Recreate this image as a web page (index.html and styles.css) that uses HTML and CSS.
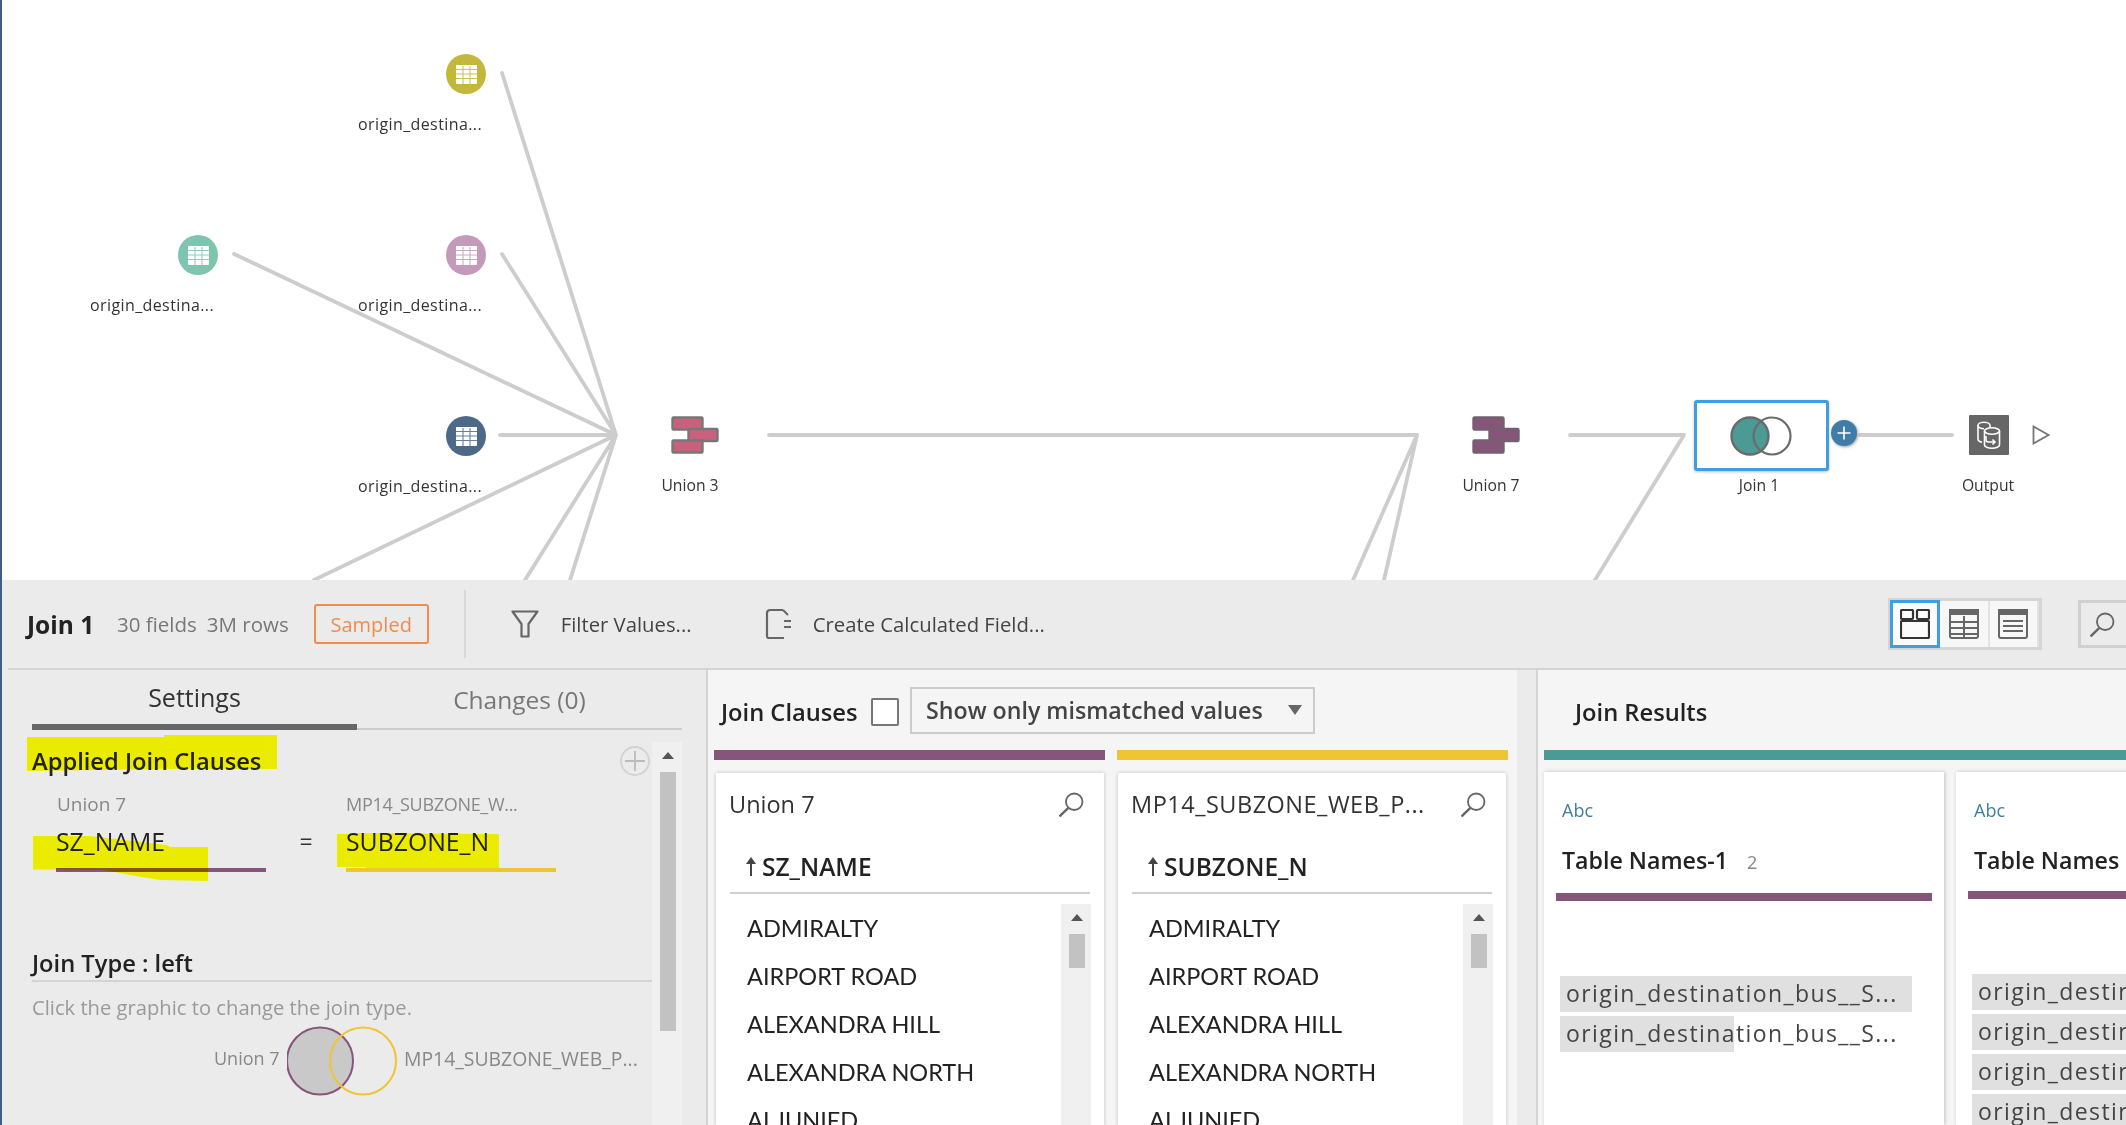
FILE: index.html
```html
<!DOCTYPE html>
<html lang="en">
<head>
<meta charset="utf-8">
<title>Join 1</title>
<link rel="stylesheet" href="styles.css">
</head>
<body>
<svg class="defs" width="0" height="0" aria-hidden="true">
  <defs>
    <symbol id="i-search" viewBox="1 0 23 23">
      <circle cx="15" cy="9" r="7.6" fill="none" stroke="currentColor" stroke-width="1.7"/>
      <path d="M9.6 14.6 1.5 22.5" fill="none" stroke="currentColor" stroke-width="2.2"/>
    </symbol>
    <symbol id="i-grid" viewBox="0 0 21 19">
      <rect width="21" height="19" rx="1" fill="#fff"/>
      <path d="M0 4.500h21M0 9h21M0 13.500h21M7 0v19M14 0v19" stroke="currentColor" stroke-width="1.100" opacity=".85"/>
      <path d="M0 .5h21" stroke="#fff" stroke-width="1"/>
    </symbol>
    <symbol id="i-brick" viewBox="0 0 48 38">
      <rect x="1.500" y="1.500" width="30" height="12" rx="1" stroke="currentColor" stroke-width="2.400"/>
      <rect x="17.500" y="13" width="29" height="12" rx="1" stroke="currentColor" stroke-width="2.400"/>
      <rect x="1.500" y="24.500" width="30" height="12" rx="1" stroke="currentColor" stroke-width="2.400"/>
    </symbol>
  </defs>
</svg>
<div class="app">
  <section class="canvas">
    <svg class="links" viewBox="0 0 2126 580" aria-hidden="true">
      <path d="M502 73 616 435M502 254 616 435M234 254 616 435M500 435H616M314 580 616 435M525 580 616 435M570 580 616 435"/>
      <path d="M769 435H1417M1353 580 1417 435M1384 580 1417 435M1570 435H1684M1595 580 1684 435M1860 435H1952"/>
    </svg>

    <div class="node dot n-yellow"><svg class="grid-icon"><use href="#i-grid"/></svg><span class="dot-label">origin_destina...</span></div>
    <div class="node dot n-pink"><svg class="grid-icon"><use href="#i-grid"/></svg><span class="dot-label">origin_destina...</span></div>
    <div class="node dot n-green"><svg class="grid-icon"><use href="#i-grid"/></svg><span class="dot-label">origin_destina...</span></div>
    <div class="node dot n-navy"><svg class="grid-icon"><use href="#i-grid"/></svg><span class="dot-label">origin_destina...</span></div>

    <svg class="node brick brick-3"><use href="#i-brick"/></svg>
    <span class="node step-label l-union3">Union 3</span>
    <svg class="node brick brick-7"><use href="#i-brick"/></svg>
    <span class="node step-label l-union7">Union 7</span>

    <div class="node join-box">
      <svg class="join-venn" viewBox="0 0 62 40" aria-hidden="true">
        <circle cx="20" cy="20" r="18.500" fill="#4b9a94" stroke="#6b6b6b" stroke-width="2.400"/>
        <circle cx="42" cy="20" r="18.500" fill="none" stroke="#6b6b6b" stroke-width="2.200"/>
      </svg>
    </div>
    <span class="node step-label l-join">Join 1</span>
    <div class="node add-btn">
      <svg viewBox="0 0 16 16" aria-hidden="true"><path d="M8 1.500v13M1.500 8h13" stroke="#fff" stroke-width="1.600"/></svg>
    </div>
    <div class="node output">
      <svg viewBox="0 0 40 40" aria-hidden="true" fill="none" stroke="#fff" stroke-width="1.600">
        <path d="M21 12.500v-2c0-1.800-2.800-3.200-6-3.200s-6 1.400-6 3.200V24c0 1.700 1.700 2.800 4 3.200"/>
        <path d="M9 10.500c0 1.800 2.800 3.200 6 3.200"/>
        <ellipse cx="23" cy="16" rx="7.500" ry="3.200"/>
        <path d="M15.500 16v14c0 1.800 3.400 3.200 7.500 3.200s7.500-1.400 7.500-3.200V16"/>
        <path d="M17 21v4c0 1 1 2 2.500 2H26M23.500 24.500 26 27l-2.500 2.500"/>
      </svg>
    </div>
    <span class="node step-label l-output">Output</span>
    <svg class="node play" viewBox="0 0 18 20" aria-hidden="true"><path d="M1.500 1.500v17l15-8.500z" fill="none" stroke="#777" stroke-width="1.800"/></svg>
  </section>

  <section class="panel">
    <header class="toolbar">
      <h1 class="tb-title">Join 1</h1>
      <span class="tb-meta">30 fields</span>
      <span class="tb-meta tb-rows">3M rows</span>
      <span class="sampled">Sampled</span>
      <span class="tb-divider"></span>
      <svg class="tb-icon filter-icon" viewBox="0 0 28 28" aria-hidden="true"><path d="M1.500 1.500h25L17.500 14v12.500h-7V14z" fill="none" stroke="#666" stroke-width="2.200" stroke-linejoin="round"/></svg>
      <span class="tb-action a-filter">Filter Values...</span>
      <svg class="tb-icon calc-icon" viewBox="0 0 26 32" aria-hidden="true"><path d="M18 2H5.500Q2 2 2 5v23q0 2 2 2h15M19 13h7M19 19h7" fill="none" stroke="#666" stroke-width="2.200"/><path d="M18 2l5 5" stroke="#666" stroke-width="2"/></svg>
      <span class="tb-action">Create Calculated Field...</span>
      <span class="tb-spacer"></span>
      <div class="view-toggle">
        <button class="view-btn active" type="button" aria-label="Cards">
          <svg viewBox="0 0 30 30" fill="none" stroke="#333" stroke-width="2.200"><rect x="1" y="1" width="12" height="9" rx="1"/><rect x="17" y="1" width="12" height="9" rx="1"/><rect x="1" y="12" width="28" height="17" rx="1"/></svg>
        </button>
        <button class="view-btn" type="button" aria-label="Table">
          <svg viewBox="0 0 30 30" fill="none" stroke="#666" stroke-width="2"><rect x="1" y="1" width="28" height="28" rx="2"/><path d="M0 3h30" stroke-width="6"/><path d="M1 13h28M1 19h28M1 25h28M15 7v22"/></svg>
        </button>
        <button class="view-btn" type="button" aria-label="List">
          <svg viewBox="0 0 30 30" fill="none" stroke="#666" stroke-width="2"><rect x="1" y="1" width="28" height="28" rx="2"/><path d="M0 3h30" stroke-width="6"/><path d="M5 12h20M5 17h20M5 22h20"/></svg>
        </button>
      </div>
      <div class="tb-search"><svg class="search-svg"><use href="#i-search"/></svg></div>
    </header>

    <div class="workspace">
      <aside class="settings">
        <div class="tabs">
          <div class="tab active">Settings</div>
          <div class="tab">Changes (0)</div>
        </div>
        <div class="settings-body">
          <div class="settings-content">
            <div class="clause-head">
              <h2 class="section-title">Applied Join Clauses</h2>
              <span class="add-clause">
                <svg viewBox="0 0 30 30" aria-hidden="true"><circle cx="15" cy="15" r="14" fill="none" stroke="#d2d2d2" stroke-width="1.800"/><path d="M15 5v20M5 15h20" stroke="#bbb" stroke-width="1.800"/></svg>
              </span>
            </div>
            <div class="clause">
              <span class="clause-src">Union 7</span>
              <span></span>
              <span class="clause-src src-long">MP14_SUBZONE_W...</span>
              <span class="clause-field u-purple">SZ_NAME</span>
              <span class="clause-eq">=</span>
              <span class="clause-field u-yellow">SUBZONE_N</span>
            </div>
            <h2 class="section-title join-type">Join Type : left</h2>
            <p class="hint">Click the graphic to change the join type.</p>
            <div class="venn-row">
              <span class="venn-label venn-left">Union 7</span>
              <svg class="venn" viewBox="0 0 110 70" aria-hidden="true">
                <ellipse cx="33" cy="35" rx="33" ry="33.500" fill="#c9c9c9" stroke="#85557a" stroke-width="2"/>
                <ellipse cx="76" cy="35" rx="33" ry="33.500" fill="none" stroke="#eec535" stroke-width="2"/>
              </svg>
              <span class="venn-label">MP14_SUBZONE_WEB_P...</span>
            </div>
          </div>
          <div class="scroll scroll-left"><span class="scroll-up"></span><span class="thumb thumb-left"></span></div>
        </div>
        <svg class="highlights" viewBox="2 670 704 455" aria-hidden="true">
          <path d="M27 737H164V735H277V769H170L27 771Z"/>
          <path d="M33 836H90L167 845L170 847H208V881L160 880L130 875L105 870L33 869.500Z"/>
          <path d="M337 834H358V833L499 834V868H366V867H337Z"/>
        </svg>
      </aside>

      <section class="clauses">
        <div class="pane-head">
          <h2 class="pane-title pt-clauses">Join Clauses</h2>
          <span class="checkbox"></span>
          <div class="dropdown"><span>Show only mismatched values</span><i class="caret"></i></div>
        </div>
        <div class="clause-cols">
          <div class="clause-col">
            <div class="colorbar c-purple"></div>
            <div class="field-card">
              <div class="fc-title"><span class="fc-name">Union 7</span><svg class="fc-search"><use href="#i-search"/></svg></div>
              <div class="fc-head"><span class="sort-arrow"></span>SZ_NAME</div>
              <div class="fc-list">
                <ul class="fc-values"><li>ADMIRALTY</li><li>AIRPORT ROAD</li><li>ALEXANDRA HILL</li><li>ALEXANDRA NORTH</li><li>ALJUNIED</li></ul>
                <div class="scroll"><span class="scroll-up"></span><span class="thumb"></span></div>
              </div>
            </div>
          </div>
          <div class="clause-col">
            <div class="colorbar c-yellow"></div>
            <div class="field-card">
              <div class="fc-title"><span class="fc-name fc-long">MP14_SUBZONE_WEB_P...</span><svg class="fc-search"><use href="#i-search"/></svg></div>
              <div class="fc-head"><span class="sort-arrow"></span>SUBZONE_N</div>
              <div class="fc-list">
                <ul class="fc-values"><li>ADMIRALTY</li><li>AIRPORT ROAD</li><li>ALEXANDRA HILL</li><li>ALEXANDRA NORTH</li><li>ALJUNIED</li></ul>
                <div class="scroll"><span class="scroll-up"></span><span class="thumb"></span></div>
              </div>
            </div>
          </div>
        </div>
      </section>

      <section class="results">
        <div class="pane-head results-head"><h2 class="pane-title">Join Results</h2></div>
        <div class="colorbar c-teal"></div>
        <div class="result-cards">
          <article class="result-card">
            <div class="abc">Abc</div>
            <div class="rc-name">Table Names-1<span class="rc-count">2</span></div>
            <div class="rc-bar"></div>
            <div class="rc-values">
              <div class="rc-value">origin_destination_bus__S...</div>
              <div class="rc-value partial">origin_destination_bus__S...</div>
            </div>
          </article>
          <article class="result-card">
            <div class="abc">Abc</div>
            <div class="rc-name">Table Names</div>
            <div class="rc-bar"></div>
            <div class="rc-values">
              <div class="rc-value">origin_destination_bus__S...</div>
              <div class="rc-value">origin_destination_bus__S...</div>
              <div class="rc-value">origin_destination_bus__S...</div>
              <div class="rc-value">origin_destination_bus__S...</div>
            </div>
          </article>
        </div>
      </section>
    </div>
  </section>
</div>
</body>
</html>
```
FILE: styles.css
```css
* { box-sizing: border-box; }
html, body { margin: 0; height: 100%; }
body { width: 2126px; height: 1125px; overflow: hidden; background: #fff; font-family: "Open Sans", "Liberation Sans", sans-serif; color: #222; }
h1, h2, p, ul { margin: 0; padding: 0; font: inherit; }
ul { list-style: none; }
.defs { position: absolute; }
.app { position: relative; width: 2126px; height: 1125px; display: flex; flex-direction: column; }
.app::after { content: ""; position: absolute; left: 0; top: 0; bottom: 0; width: 2px; background: #3f5f85; }

/* flow canvas: free diagram */
.canvas { position: relative; height: 580px; flex: none; background: #fff; overflow: hidden; }
.links { position: absolute; left: 0; top: 0; width: 2126px; height: 580px; }
.links path { fill: none; stroke: #cdcdcd; stroke-width: 3.800; stroke-linecap: round; stroke-linejoin: round; }
.node { position: absolute; }
.dot { width: 40px; height: 40px; border-radius: 50%; display: flex; align-items: center; justify-content: center; }
.grid-icon { width: 21px; height: 19px; }
.dot-label { position: absolute; left: -88px; top: 60px; width: 130px; font-size: 16px; letter-spacing: .4px; line-height: 20px; color: #333; white-space: nowrap; }
.n-yellow { left: 446px; top: 54px; background: #c3b83b; color: #c3b83b; }
.n-pink { left: 446px; top: 235px; background: #c39ab9; color: #c39ab9; }
.n-green { left: 178px; top: 235px; background: #7fc4ae; color: #7fc4ae; }
.n-navy { left: 446px; top: 416px; background: #4c6a87; color: #4c6a87; }
.brick { width: 48px; height: 38px; color: #777; }
.brick-3 { left: 671px; top: 416px; fill: #c9607c; }
.brick-7 { left: 1472px; top: 416px; fill: #85557a; color: #75606f; }
.step-label { font-size: 15.700px; line-height: 20px; color: #333; white-space: nowrap; transform: translateX(-50%); }
.l-union3 { left: 690px; top: 475px; }
.l-union7 { left: 1491px; top: 475px; }
.l-join { left: 1759px; top: 475px; }
.l-output { left: 1988px; top: 475px; }
.join-box { left: 1694px; top: 400px; width: 135px; height: 71px; background: #fff; border: 3px solid #3e9ee0; border-radius: 3px; box-shadow: 0 1px 3px rgba(0,0,0,.25); display: flex; align-items: center; padding-left: 33px; }
.join-venn { width: 62px; height: 40px; }
.add-btn { left: 1831px; top: 420px; width: 26px; height: 26px; border-radius: 50%; background: #3f7da8; box-shadow: 1px 1px 3px rgba(0,0,0,.4); display: flex; align-items: center; justify-content: center; }
.add-btn svg { width: 16px; height: 16px; }
.output { left: 1969px; top: 415px; width: 40px; height: 40px; background: #666; border-radius: 1px; }
.output svg { display: block; width: 40px; height: 40px; }
.play { left: 2032px; top: 425px; width: 18px; height: 20px; }

/* bottom panel */
.panel { flex: 1; min-height: 0; display: flex; flex-direction: column; background: #ebebeb; margin-left: 2px; }
.toolbar { flex: none; height: 90px; margin-left: 6px; padding-left: 19px; border-bottom: 2px solid #d4d4d4; display: flex; align-items: center; }
.tb-title { flex: none; font-size: 24.500px; font-weight: 700; color: #222; width: 90px; white-space: nowrap; }
.tb-meta { flex: none; font-size: 20.500px; color: #777; white-space: nowrap; }
.tb-rows { margin-left: 10px; }
.sampled { margin-left: 25px; flex: none; width: 115px; height: 40px; border: 2px solid #ef8c4e; border-radius: 3px; color: #ef8c4e; font-size: 20px; display: flex; align-items: center; justify-content: center; }
.tb-divider { flex: none; width: 2px; height: 68px; margin-left: 35px; background: #d8d8d8; }
.tb-icon { flex: none; }
.filter-icon { width: 28px; height: 28px; margin-left: 45px; }
.calc-icon { width: 26px; height: 32px; margin-left: 71px; }
.tb-action { flex: none; font-size: 20.300px; color: #444; margin-left: 22px; white-space: nowrap; }
.a-filter { width: 133px; }
.tb-spacer { flex: 1 1 0; }
.view-toggle { flex: none; display: flex; width: 154px; height: 52px; border: 3px solid #d5d5d5; background: #f7f7f7; }
.view-btn { flex: 1; border: 0; border-right: 2px solid #e2e2e2; background: transparent; padding: 0; display: flex; align-items: center; justify-content: center; }
.view-btn svg { width: 30px; height: 30px; }
.view-btn.active { flex: none; width: 50px; margin: -1px 0 -1px -1px; background: #fbfbfb; border: 3px solid #3e9ee0; }
.tb-search { flex: none; width: 48px; height: 48px; margin-left: 36px; border: 3px solid #d0d0d0; border-right: 0; background: #ebebeb; display: flex; align-items: center; padding-left: 9px; color: #666; }
.search-svg { width: 25px; height: 25px; }

.workspace { flex: 1; min-height: 0; display: flex; }

/* settings column */
.settings { position: relative; flex: none; width: 704px; padding-left: 30px; overflow: hidden; }
.tabs { width: 650px; display: grid; grid-template-columns: 325px 325px; }
.tab { height: 60px; padding-bottom: 4px; border-bottom: 2px solid #ccc; display: flex; align-items: center; justify-content: center; font-size: 24.500px; color: #777; padding-top: 4px; }
.tab.active { border-bottom: 6px solid #666; color: #333; padding: 2px 0 2px; font-size: 25px; }
.settings-body { display: flex; }
.settings-content { width: 620px; flex: none; }
.clause-head { height: 62px; padding-right: 2px; display: flex; align-items: center; justify-content: space-between; }
.section-title { font-size: 23.700px; font-weight: 600; color: #222; line-height: 30px; white-space: nowrap; }
.add-clause { width: 30px; height: 30px; }
.add-clause svg { display: block; }
.clause { display: grid; grid-template-columns: 210px 80px 210px; grid-template-rows: 24px 52px; padding-left: 24px; }
.clause-src { font-size: 19px; color: #888; white-space: nowrap; line-height: 24px; padding-left: 1px; }
.src-long { font-size: 18px; letter-spacing: -.3px; padding-left: 0; }
.clause-field { font-size: 24.800px; color: #222; line-height: 50px; height: 56px; border-bottom: 4px solid; padding-left: 0; white-space: nowrap; }
.u-purple { border-color: #85557a; }
.u-yellow { border-color: #eec535; }
.clause-eq { font-size: 23px; color: #333; line-height: 50px; text-align: center; }
.join-type { margin-top: 78px; height: 36px; border-bottom: 2px solid #d4d4d4; line-height: 34px; }
.hint { margin-top: 13px; font-size: 20.200px; line-height: 24px; color: #999; white-space: nowrap; }
.venn-row { margin-top: 7px; margin-left: 182px; display: flex; align-items: center; gap: 7px; height: 70px; white-space: nowrap; }
.venn { width: 110px; height: 70px; flex: none; }
.venn-label { font-size: 19.400px; color: #888; margin-bottom: 6px; }
.venn-left { flex: none; width: 66px; font-size: 18px; }
.scroll { flex: none; width: 30px; background: #f0f0f0; padding: 10px 6px 0 8px; display: flex; flex-direction: column; align-items: center; }
.scroll-up { flex: none; width: 0; height: 0; border: 6px solid transparent; border-top: 0; border-bottom: 7px solid #555; margin-bottom: 13px; }
.thumb { flex: none; width: 16px; height: 34px; background: #c2c2c2; }
.scroll-left { margin-top: 12px; height: 400px; }
.thumb-left { height: 259px; }
.highlights { position: absolute; left: 0; top: 0; width: 704px; height: 455px; mix-blend-mode: multiply; pointer-events: none; }
.highlights path { fill: #ffff00; }

/* panes */
.clauses, .results { background: #f5f5f5; border-left: 2px solid #d4d4d4; }
.clauses { flex: none; width: 811px; padding-left: 6px; }
.results { flex: 1; min-width: 0; margin-left: 19px; padding-left: 6px; overflow: hidden; }
.pane-head { height: 80px; display: flex; align-items: center; padding-left: 7px; }
.pane-title { font-size: 23.700px; font-weight: 600; color: #222; white-space: nowrap; padding-top: 3px; }
.pt-clauses { width: 136px; flex: none; }
.results-head { padding-left: 31px; }
.checkbox { flex: none; width: 28px; height: 28px; margin-left: 14px; margin-top: 3px; background: #fff; border: 2px solid #777; border-radius: 2px; }
.dropdown { flex: none; width: 405px; height: 47px; margin-left: 11px; border: 2px solid #ccc; display: flex; align-items: center; justify-content: space-between; padding: 0 11px 0 14px; font-size: 23.200px; font-weight: 600; color: #444; white-space: nowrap; }
.caret { width: 0; height: 0; border: 7px solid transparent; border-bottom: 0; border-top: 10px solid #666; }
.colorbar { height: 10px; flex: none; }
.c-purple { background: #85557a; }
.c-yellow { background: #eec535; }
.c-teal { background: #4b9a94; }
.clause-cols { display: grid; grid-template-columns: 391px 391px; gap: 12px; }
.clause-col { display: flex; flex-direction: column; height: 375px; }
.field-card { flex: 1; min-height: 0; margin: 13px 1px 0 2px; background: #fff; box-shadow: 0 0 4px rgba(0,0,0,.22); display: flex; flex-direction: column; overflow: hidden; }
.clause-col + .clause-col .field-card { margin: 13px 2px 0 1px; }
.fc-title { flex: none; height: 62px; padding: 0 20px 0 13px; display: flex; align-items: center; justify-content: space-between; }
.fc-name { font-size: 23.500px; color: #333; white-space: nowrap; }
.fc-long { letter-spacing: .5px; }
.fc-search { width: 25px; height: 25px; color: #666; flex: none; }
.fc-head { flex: none; height: 59px; margin: 0 14px; border-bottom: 2px solid #d0d0d0; padding: 6px 0 0 14px; display: flex; align-items: center; font-size: 24.500px; font-weight: 600; color: #222; }
.sort-arrow { position: relative; flex: none; width: 11px; height: 19px; margin-right: 7px; left: 2px; }
.sort-arrow::before { content: ""; position: absolute; left: 4px; top: 5px; width: 2px; height: 14px; background: #444; }
.sort-arrow::after { content: ""; position: absolute; left: 0; top: 0; width: 0; height: 0; border: 5px solid transparent; border-top: 0; border-bottom: 7px solid #444; }
.fc-list { flex: 1; min-height: 0; margin-top: 10px; display: flex; justify-content: space-between; padding-right: 13px; }
.fc-values { padding-left: 31px; font-family: "Lato", "Liberation Sans", sans-serif; font-size: 23.500px; color: #222; }
.fc-values li { height: 48px; line-height: 48px; white-space: nowrap; }

/* results */
.result-cards { display: flex; gap: 12px; margin-top: 12px; }
.result-card { flex: none; width: 400px; height: 353px; background: #fff; box-shadow: 1px 0 4px rgba(0,0,0,.22); }
.abc { padding: 27px 0 0 18px; font-size: 18px; line-height: 22px; color: #3f7fa0; }
.rc-name { padding: 26px 0 0 18px; font-size: 23.200px; font-weight: 600; line-height: 26px; color: #222; white-space: nowrap; }
.rc-count { margin-left: 19px; font-weight: 400; font-size: 18px; color: #888; }
.rc-bar { height: 8px; margin: 18px 12px 0; background: #85557a; }
.rc-values { margin: 75px 0 0 16px; display: flex; flex-direction: column; gap: 4px; }
.rc-value { width: 352px; height: 36px; padding: 0 0 2px 6px; display: flex; align-items: center; background: #e0e0e0; font-size: 23px; letter-spacing: 1.400px; color: #444; white-space: nowrap; }
.rc-value.partial { background: linear-gradient(to right, #e0e0e0 174px, transparent 174px); }
```
